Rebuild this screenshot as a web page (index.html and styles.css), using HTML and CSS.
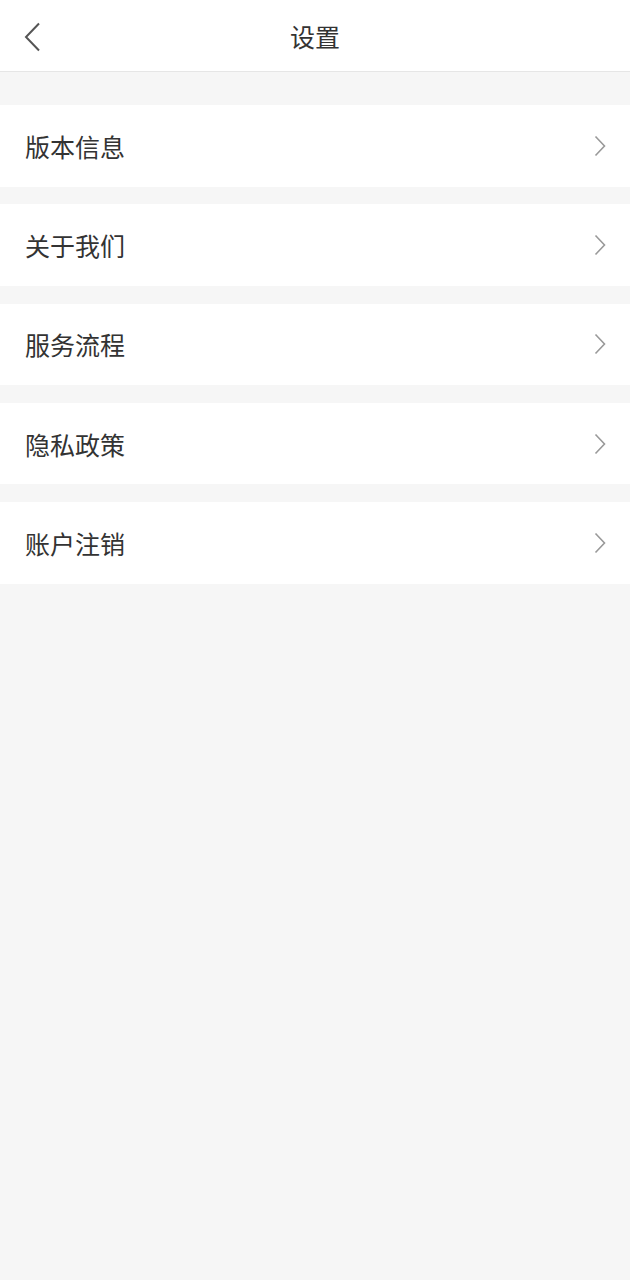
FILE: index.html
```html
<!DOCTYPE html>
<html lang="zh-CN">
<head>
  <meta charset="UTF-8" />
  <meta name="viewport" content="width=device-width, initial-scale=1.0"/>
  <title>设置</title>
  <link rel="stylesheet" href="styles.css">
</head>
<body>
  <header class="topbar">
    <span class="back">
      <svg width="20" height="30" viewBox="0 0 20 30"><path d="M16 1.5 L3 15 L16 28.5" fill="none" stroke="#555" stroke-width="2"/></svg>
    </span>
    <h1 class="title">设置</h1>
  </header>

  <ul class="menu">
    <li class="item"><span>版本信息</span><svg class="arrow" width="12" height="22" viewBox="0 0 12 22"><path d="M1.5 1.5 L10.5 11 L1.5 20.5" fill="none" stroke="#999" stroke-width="1.6"/></svg></li>
    <li class="item"><span>关于我们</span><svg class="arrow" width="12" height="22" viewBox="0 0 12 22"><path d="M1.5 1.5 L10.5 11 L1.5 20.5" fill="none" stroke="#999" stroke-width="1.6"/></svg></li>
    <li class="item"><span>服务流程</span><svg class="arrow" width="12" height="22" viewBox="0 0 12 22"><path d="M1.5 1.5 L10.5 11 L1.5 20.5" fill="none" stroke="#999" stroke-width="1.6"/></svg></li>
    <li class="item"><span>隐私政策</span><svg class="arrow" width="12" height="22" viewBox="0 0 12 22"><path d="M1.5 1.5 L10.5 11 L1.5 20.5" fill="none" stroke="#999" stroke-width="1.6"/></svg></li>
    <li class="item"><span>账户注销</span><svg class="arrow" width="12" height="22" viewBox="0 0 12 22"><path d="M1.5 1.5 L10.5 11 L1.5 20.5" fill="none" stroke="#999" stroke-width="1.6"/></svg></li>
  </ul>
</body>
</html>
```

FILE: styles.css
```css
html, body {
  margin: 0;
  padding: 0;
  background: #f6f6f6;
  font-family: "Noto Sans CJK SC", "Noto Sans", sans-serif;
  color: #333;
}

.topbar {
  height: 72px;
  background: #fff;
  border-bottom: 1px solid #e6e6e6;
  box-sizing: border-box;
  display: flex;
  align-items: center;
  justify-content: center;
  position: relative;
}

.back {
  position: absolute;
  left: 23px;
  top: 22px;
  display: flex;
}

.title {
  margin: 0;
  font-size: 25px;
  font-weight: normal;
  color: #333;
}

.menu {
  list-style: none;
  margin: 0;
  padding: 33px 0 0;
}

.item {
  height: 81.5px;
  margin-bottom: 17.75px;
  background: #fff;
  display: flex;
  align-items: center;
  justify-content: space-between;
  padding: 0 24px 0 25px;
  font-size: 25px;
  color: #333;
}

.arrow {
  display: block;
}
```
